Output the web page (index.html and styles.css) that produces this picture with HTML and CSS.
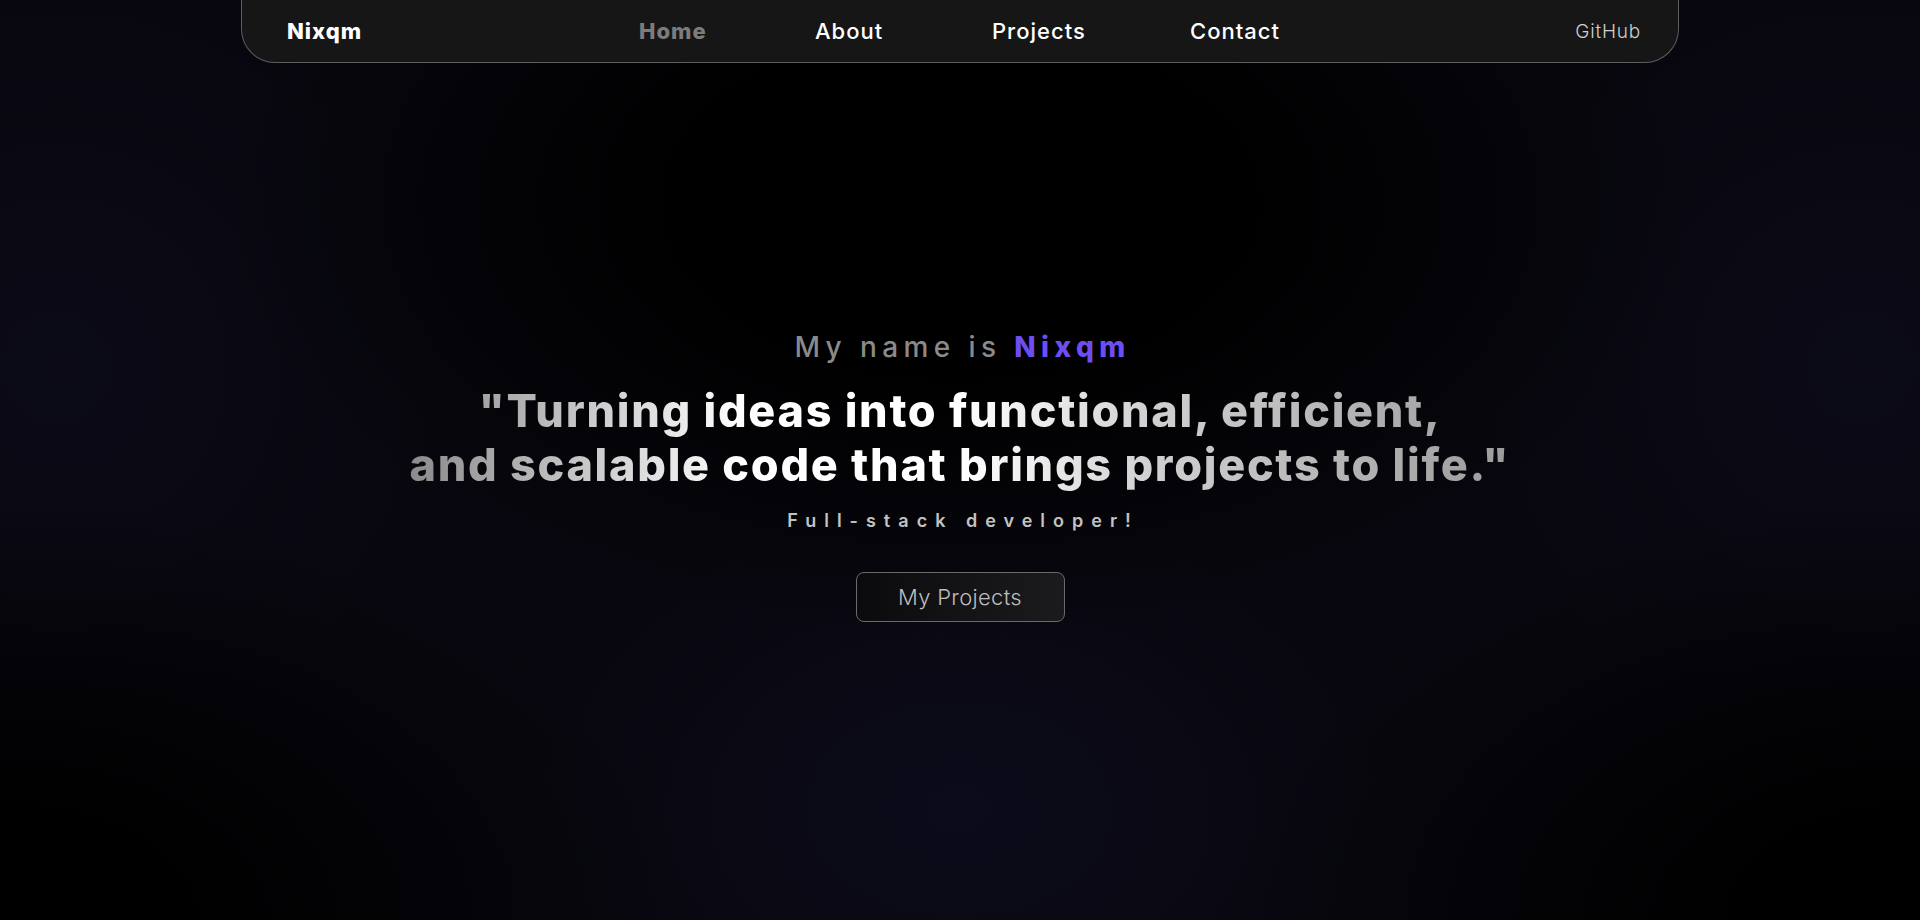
FILE: index.html
```html
<!DOCTYPE html>
<html lang="en">
<head>
<meta charset="utf-8">
<title>Nixqm</title>
<link rel="stylesheet" href="styles.css">
</head>
<body>
<div class="page">
  <header class="nav">
    <a class="logo" href="#">Nixqm</a>
    <nav class="links">
      <a class="link active" href="#">Home</a>
      <a class="link" href="#">About</a>
      <a class="link" href="#">Projects</a>
      <a class="link" href="#">Contact</a>
    </nav>
    <a class="github" href="#">GitHub</a>
  </header>
  <main class="hero">
    <p class="intro">My name is <span class="name">Nixqm</span></p>
    <h1 class="headline">"Turning ideas into functional, efficient,<br>and scalable code that brings projects to life."</h1>
    <p class="role">Full-stack developer!</p>
    <a class="btn" href="#">My Projects</a>
  </main>
</div>
</body>
</html>
```
FILE: styles.css
```css
html, body {
  margin: 0;
  padding: 0;
}
body {
  height: 920px;
  overflow: hidden;
  background-color: #08070f;
  background-image:
    radial-gradient(ellipse 740px 440px at 50% 22%, #000 38%, rgba(0,0,0,0) 100%),
    radial-gradient(ellipse 700px 420px at 0% 100%, #000 25%, rgba(0,0,0,0) 100%),
    radial-gradient(ellipse 700px 420px at 100% 100%, #000 25%, rgba(0,0,0,0) 100%),
    radial-gradient(ellipse 420px 300px at 50% 88%, #0c0b1a 0%, rgba(12,11,26,0) 100%),
    radial-gradient(ellipse 380px 380px at 3% 40%, #0b0a17 0%, rgba(11,10,23,0) 100%),
    radial-gradient(ellipse 380px 380px at 97% 40%, #0b0a17 0%, rgba(11,10,23,0) 100%);
  font-family: Inter, "Noto Sans", sans-serif;
}
a { text-decoration: none; }

.nav {
  box-sizing: border-box;
  width: 1438px;
  height: 63px;
  margin: 0 auto;
  background: #161616;
  border: 1px solid #5e5e5e;
  border-top: none;
  border-radius: 0 0 34px 34px;
  display: grid;
  grid-template-columns: 352px 1fr auto;
  align-items: center;
  padding: 0 37px 0 45px;
}
.logo {
  font-weight: 800;
  font-size: 22px;
  color: #fff;
  letter-spacing: 1px;
}
.links {
  display: grid;
  grid-template-columns: 176px 177px 198px auto;
}
.link {
  font-weight: 500;
  font-size: 22px;
  color: #fff;
  letter-spacing: 1px;
}
.link.active {
  color: #7c7c7c;
  font-weight: 800;
}
.github {
  font-weight: 300;
  font-size: 19px;
  color: #cfcfcf;
  letter-spacing: 0.8px;
}

.hero {
  display: flex;
  flex-direction: column;
  align-items: center;
  text-align: center;
  padding-top: 264px;
}
.intro {
  margin: 0;
  padding-left: 5px;
  font-size: 28px;
  line-height: 40px;
  font-weight: 500;
  color: #8a8a8a;
  letter-spacing: 5.4px;
}
.name {
  color: #6d4ef5;
  font-weight: 800;
}
.headline {
  display: inline-block;
  margin: 17px 0 0;
  font-size: 45px;
  line-height: 54px;
  font-weight: 800;
  letter-spacing: 1.7px;
  background-image: linear-gradient(90deg, #8a8a8a 0%, #ffffff 30%, #ffffff 50%, #cfcfcf 68%, #9c9c9c 100%);
  -webkit-background-clip: text;
  background-clip: text;
  color: transparent;
}
.role {
  margin: 16px 0 0;
  padding-left: 6px;
  font-size: 18px;
  line-height: 26px;
  font-weight: 600;
  color: #c2c2c2;
  letter-spacing: 8px;
}
.btn {
  box-sizing: border-box;
  margin-top: 38px;
  width: 209px;
  height: 50px;
  display: flex;
  align-items: center;
  justify-content: center;
  border: 1px solid #6a6a6a;
  border-radius: 8px;
  background: linear-gradient(90deg, #0b0b0e 0%, #151517 60%, #1b1b1d 100%);
  color: #bdbdbd;
  font-size: 22px;
  font-weight: 300;
  letter-spacing: 0.3px;
}
```
